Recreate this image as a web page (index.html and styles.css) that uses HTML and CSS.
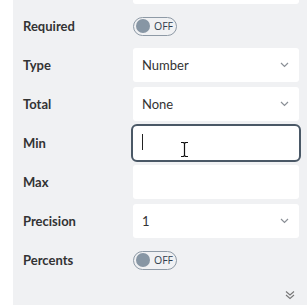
FILE: index.html
```html
<!DOCTYPE html>
<html lang="en">
<head>
    <meta charset="UTF-8">
    <meta name="viewport" content="width=device-width, initial-scale=1.0">
    <title>Field settings</title>
    <link rel="stylesheet" href="styles.css">
</head>
<body>
    <div class="panel">
        <div class="form">
            <span></span>
            <div class="stub"></div>

            <label class="label">Required</label>
            <div class="control"><span class="toggle"><span class="knob"></span>OFF</span></div>

            <label class="label">Type</label>
            <div class="box select">Number<svg class="chev" width="9" height="6" viewBox="0 0 9 6"><path d="M1 1l3.5 3.5L8 1" fill="none" stroke="#8a8f96" stroke-width="1.2"/></svg></div>

            <label class="label">Total</label>
            <div class="box select">None<svg class="chev" width="9" height="6" viewBox="0 0 9 6"><path d="M1 1l3.5 3.5L8 1" fill="none" stroke="#8a8f96" stroke-width="1.2"/></svg></div>

            <label class="label">Min</label>
            <div class="box focused">
                <span class="caret"></span>
                <svg class="ibeam" width="9" height="17" viewBox="0 0 9 17"><path d="M1 1.5h2.5l1 1 1-1H8M4.5 2.5v12M1 15.5h2.5l1-1 1 1H8" fill="none" stroke="#111" stroke-width="1.2"/></svg>
            </div>

            <label class="label">Max</label>
            <div class="box"></div>

            <label class="label">Precision</label>
            <div class="box select">1<svg class="chev" width="9" height="6" viewBox="0 0 9 6"><path d="M1 1l3.5 3.5L8 1" fill="none" stroke="#8a8f96" stroke-width="1.2"/></svg></div>

            <label class="label">Percents</label>
            <div class="control"><span class="toggle"><span class="knob"></span>OFF</span></div>
        </div>
        <div class="more">
            <svg width="10" height="10" viewBox="0 0 10 10"><path d="M1 1.5l4 3.5 4-3.5M1 5l4 3.5L9 5" fill="none" stroke="#777" stroke-width="1.1"/></svg>
        </div>
    </div>
</body>
</html>
```

FILE: styles.css
```css
body {
    margin: 0;
    background-color: #fff;
    font-family: Lato, "Open Sans", sans-serif;
    color: #333;
}

.panel {
    margin-left: 13px;
    height: 305px;
    background-color: #f0f1f3;
    padding: 0 8px 0 10px;
    overflow: hidden;
}

.form {
    display: grid;
    grid-template-columns: 110px 1fr;
    row-gap: 5px;
    align-items: center;
}

.stub {
    height: 4px;
    background-color: #fff;
    border-radius: 0 0 3px 3px;
}

.label {
    font-size: 13px;
    font-weight: 700;
    color: #333;
}

.control {
    height: 34px;
    display: flex;
    align-items: center;
}

.box {
    height: 34px;
    box-sizing: border-box;
    background-color: #fff;
    border-radius: 3px;
    padding: 0 9px;
    display: flex;
    align-items: center;
    font-size: 13px;
    color: #333;
    position: relative;
}

.select {
    justify-content: space-between;
    padding-right: 10px;
}

.focused {
    outline: 2px solid #4a5866;
    border-radius: 4px;
}

.caret {
    width: 1px;
    height: 16px;
    background-color: #222;
    margin-top: -3px;
}

.ibeam {
    position: absolute;
    left: 47px;
    top: 15px;
}

.toggle {
    width: 44px;
    height: 19px;
    box-sizing: border-box;
    border: 1px solid #8e9aa6;
    border-radius: 10px;
    display: flex;
    align-items: center;
    gap: 4px;
    padding-left: 2px;
    font-size: 10.5px;
    font-family: "Open Sans", sans-serif;
    color: #2f3d4d;
}

.knob {
    width: 14px;
    height: 14px;
    border-radius: 50%;
    background-color: #8796a4;
}

.more {
    display: flex;
    justify-content: flex-end;
    padding: 13px 4px 0 0;
}
```
